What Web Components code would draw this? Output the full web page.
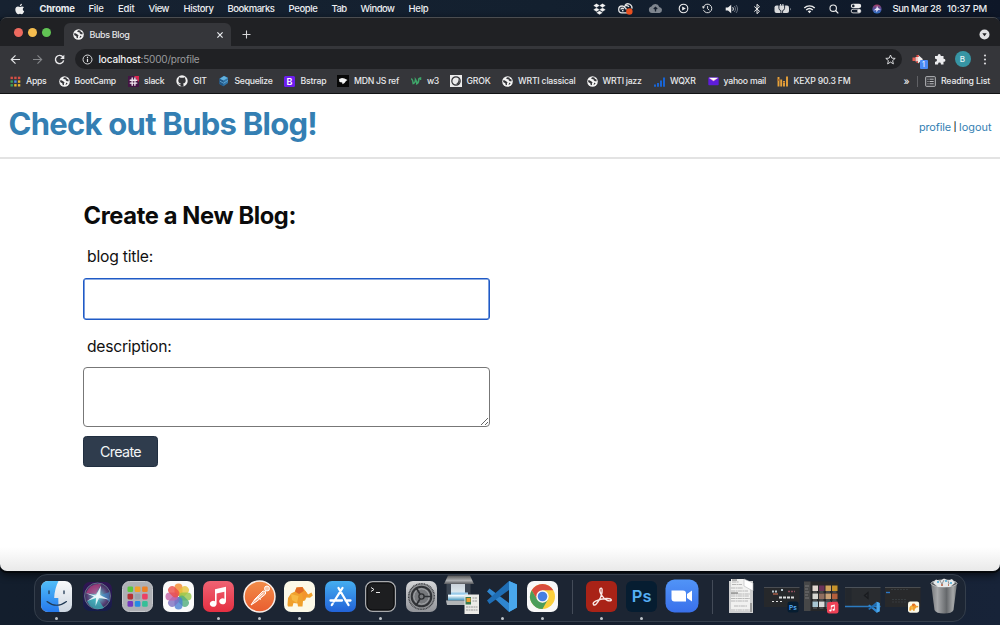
<!DOCTYPE html>
<html lang="en">
<head>
<meta charset="utf-8">
<title>Bubs Blog</title>
<style>
html,body{margin:0;height:100%;overflow:hidden;background:#141e2c}
body{font-family:Inter,"Liberation Sans",sans-serif}
</style>
</head>
<body>
<mac-desktop></mac-desktop>
<script>
const define=(name,html,init)=>customElements.define(name,class extends HTMLElement{
  constructor(){super();this.attachShadow({mode:'open'});}
  connectedCallback(){
    if(this.ready)return;this.ready=true;
    const t=document.createElement('template');
    t.innerHTML=typeof html==='function'?html(this):html;
    this.shadowRoot.append(t.content.cloneNode(true));
    if(init)init(this);
  }
});

/* name: [width, height, svg body] */
const globe='<circle cx="5.5" cy="5.5" r="5.3" fill="#f4f4f4"/><path d="M.8 4.6 2.500 4.200 4.500 5.600 5.600 6.400 4.900 7.400 5 9 3.800 9.200 3.300 7.200 1.500 6.300zM5.200 1.300l-1.100 1 .9 1 1.300-.2.4 1.200 1.200.9 1.800.1-.4-2-1.300-.4-.6-1.300zM7.200 6.800l1.400.1-.7 1.300-1.400.7z" fill="#35363a"/>';
const vs='<path d="M24 1 32 4.500V27.500L24 32 2 11.500 4.500 8.500 24 23z" fill="#2f86cf"/><path d="M24 1 2 20.500 4.500 24 24 10z" fill="#1f6eb5"/><path d="M24 1 32 4.500V27.500L24 32z" fill="#49a7ec"/>';
const note='<path d="M12 9.500 22.500 7V21a3.200 2.700 0 1 1-1.900-2.500V11.800L13.900 13.300V23.300a3.200 2.700 0 1 1-1.900-2.500z" fill="#fff"/>';
const eleph='<path d="M3.500 24 4 17 7 12.500 11 10.500 12.500 6.500 18.500 6 21.500 10 24 13.500 27.500 11.500 28.800 14.500 26 16.800 22.500 16.500 21 19.500 19 20 18.500 25.500H14L13.500 22.500 9.500 22 8.500 25.500H4z" fill="#f0a02c"/><path d="M11 10.500 12.500 6.500 18.500 6 20 10 15 13z" fill="#e06b25"/><path d="M7 13 14.500 15 13 22 8 19z" fill="#f7b843"/><path d="M18 11 21.500 10 24 14 21 16.500 19 20z" fill="#f3952c"/>';
const I={
apple:[10,12,'<path d="M7 .7c0 1.400-1 2.400-2.200 2.400C4.800 1.800 5.700.9 7 .7zM8.900 4.300c-1.600 1-1.500 3.200.3 4C8.700 9.700 7.700 11.200 6.800 11.200c-.7 0-1-.4-1.800-.4s-1.100.4-1.800.4C1.800 11.200.3 8.700.3 6.600c0-2 1.300-3.200 2.700-3.200.8 0 1.500.5 2 .5s1.200-.5 2.200-.5c.7 0 1.300.3 1.700.9z" fill="#eee"/>'],
dropbox:[13,12,'<path d="M3.500.8 6.300 2.600 3.500 4.400.7 2.600zM9.500.8l2.800 1.800-2.800 1.800-2.800-1.800zM3.500 4.900l2.800 1.800-2.800 1.800-2.800-1.800zM9.500 4.900l2.800 1.800-2.800 1.800-2.800-1.800zM6.500 8.100l2.800 1.600-2.800 1.700-2.800-1.700z" fill="#f4f4f4" stroke="#f4f4f4" stroke-width=".3"/>'],
cc:[15,12,'<path d="M7 2.400C8 .9 10 .4 11.700 1.300s2.600 2.500 2.200 4.400M10 9.900H4C2.200 9.900.7 8.500.7 6.500S2.300 3 4.200 3c2.400 0 3.200 2.300 4.300 3.500M3 6.500c0-1.500 2-1.700 2.800-.4M5.500 4.200C7 2.400 9.200 2.200 11 3.700M4 7.500l1.500.4" fill="none" stroke="#e6e6e6" stroke-width="1.300"/><circle cx="11.400" cy="8.500" r="3.200" fill="#e8501f"/>'],
cloud:[15,11,'<path d="M4 10a3.300 3.300 0 0 1-.6-6.500A4.200 4.200 0 0 1 11.300 3.900 3.100 3.100 0 0 1 11.600 10z" fill="#7e858e"/><path d="M7.500 8.500V4.500M5.800 6 7.500 4.300 9.200 6" stroke="#17202e" stroke-width="1.300" fill="none"/>'],
play:[11,11,'<circle cx="5.500" cy="5.500" r="4.300" fill="none" stroke="#eee" stroke-width="1.100"/><path d="M4.200 3.400 7.800 5.500 4.200 7.600z" fill="#eee"/>'],
clock:[11,11,'<path d="M1.400 4.100A4.300 4.300 0 1 1 1.500 7.100M5.600 3V5.700L7.300 7.200" fill="none" stroke="#ddd" stroke-width="1"/><path d="M0 3.200 3 3.700 1.100 5.900z" fill="#ddd"/>'],
vol:[14,10,'<path d="M.7 3.400H3L6.200.8V9.200L3 6.600H.7z" fill="#eee"/><path d="M7.700 3.200c.8 1 .8 2.600 0 3.600" fill="none" stroke="#eee"/><path d="M9.300 2c1.600 1.700 1.600 4.300 0 6M11 1c2 2.300 2 5.700 0 8" fill="none" stroke="#7d8590" stroke-width=".8"/>'],
bt:[8,12,'<path d="M1.300 3.500 6.500 8.300 4 10.700V1.300L6.500 3.700 1.300 8.500" fill="none" stroke="#eee" stroke-width="1"/>'],
batt:[19,10,'<rect x="1.500" y="1.500" width="14.500" height="7.500" rx="2" fill="#d8d9db"/><path d="M17 3.700v2.800q1.300-1.400 0-2.800z" fill="#d8d9db"/><path d="M5.900 1V4.300q.2 2 2 2.300V9.500M11.600 1V4.300q-.2 2-2 2.300V9.500" stroke="#16202f" stroke-width=".9" fill="none"/><path d="M7.600 0V1.700M9.900 0V1.700" stroke="#fff" stroke-width=".9" fill="none"/>'],
wifi:[13,10,'<path d="M1.300 4c2.900-2.900 7.500-2.900 10.400 0M3.200 6c1.900-1.800 4.700-1.800 6.600 0" fill="none" stroke="#eee" stroke-width="1.400"/><path d="M4.700 7.300q1.800-1.400 3.600 0L6.500 9.200z" fill="#eee"/>'],
search:[10,10,'<circle cx="4.200" cy="4.200" r="3.200" fill="none" stroke="#eee" stroke-width="1.100"/><path d="M6.500 6.500 9.300 9.300" stroke="#eee" stroke-width="1.200"/>'],
ctrl:[12,11,'<rect x=".8" y=".8" width="10.400" height="4.200" rx="2.100" fill="#eee"/><circle cx="3.300" cy="2.900" r="1.300" fill="#17202e"/><rect x="1.200" y="6.200" width="9.600" height="3.700" rx="1.850" fill="none" stroke="#ddd" stroke-width=".9"/><circle cx="8.900" cy="8.050" r="1.700" fill="#eee"/>'],
siriS:[10,10,'<defs><linearGradient id="a" x2="0" y2="1"><stop stop-color="#b23c62"/><stop offset=".4" stop-color="#5b4a94"/><stop offset="1" stop-color="#2c75c9"/></linearGradient></defs><circle cx="5" cy="5" r="4.600" fill="url(#a)"/><path d="M1.500 6.500 4.500 4 5 1.500 6 4 8.800 5.500 6 6 4.500 8.500 4.200 6z" fill="#e9e5fa"/>'],
globe:[11,11,globe],
close:[8,8,'<path d="M1.400 1.400 6.600 6.600M6.600 1.400 1.400 6.600" stroke="#e8eaed" stroke-width="1.200"/>'],
plus:[9,9,'<path d="M4.500.5V8.500M.5 4.500H8.500" stroke="#d5d6d8" stroke-width="1.100"/>'],
drop:[11,11,'<circle cx="5.500" cy="5.500" r="5" fill="#e0e1e3"/><path d="M3.300 4.300H7.700L5.500 7.300z" fill="#202124"/>'],
back:[11,11,'<path d="M10 5.500H1.500M5.500 1.300 1.300 5.500 5.500 9.700" stroke="#e4e5e7" stroke-width="1.200" fill="none"/>'],
fwd:[11,11,'<path d="M1 5.500H9.500M5.500 1.300 9.700 5.500 5.500 9.700" stroke="#85878a" stroke-width="1.100" fill="none"/>'],
reload:[11,11,'<path d="M9 3.200A4.100 4.100 0 1 0 9.600 6.300" stroke="#e8e8ea" stroke-width="1.400" fill="none"/><path d="M10.300.8V5H6.100z" fill="#e8e8ea"/>'],
info:[11,11,'<circle cx="5.500" cy="5.500" r="4.500" fill="none" stroke="#d8d9db"/><path d="M5.500 4.800V8M5.500 2.700V3.900" stroke="#e8e8ea" stroke-width="1.200"/>'],
star:[11,11,'<path d="M5.500 1 6.800 4.100 10.200 4.400 7.600 6.600 8.400 9.900 5.500 8.100 2.600 9.900 3.400 6.600.8 4.400 4.200 4.100z" fill="none" stroke="#dedfe1" stroke-width=".95"/>'],
horn:[12,11,'<path d="M.5 3.500H3.500V7H.5z" fill="#ea5a50"/><path d="M3.500 3H6.500V7.500H3.500z" fill="#f3c4c0"/><path d="M6 .8 11 5.200 6 9.500z" fill="#f0eeee"/><path d="M4.500 1H6.200L7.200 2.800 4.500 3zM4.500 7.500H6V9H4.500z" fill="#e74940"/>'],
puzzle:[12,12,'<path d="M1 3h2.700V2.500a1.500 1.500 0 0 1 3 0V3h2.800v2.800h.4a1.500 1.500 0 0 1 0 3h-.4V11.500H6.900V11a1.400 1.400 0 0 0-2.800 0v.5H1V8.700h.5a1.400 1.400 0 0 0 0-2.900H1z" fill="#ececee"/>'],
dots:[4,11,'<g fill="#d5d6d8"><circle cx="2" cy="1.500" r="1.100"/><circle cx="2" cy="5.500" r="1.100"/><circle cx="2" cy="9.500" r="1.100"/></g>'],
apps:[11,11,[['#d64f45','#d64f45','#d64f45'],['#3c9f58','#4b87e8','#e8b530'],['#3c9f58','#e8b530','#e8b530']].map((r,y)=>r.map((c,x)=>`<rect x="${.5+x*3.7}" y="${.7+y*3.7}" width="2.400" height="2.400" fill="${c}"/>`).join('')).join('')],
slack:[11,11,'<path d="M0 0H11V11H0z" fill="#441544"/><path d="M6 0H11V6z" fill="#d9264e"/><path d="M2.200 4.200H8.800M2.200 7.100H8.800M4.200 2V9.200M6.900 2V9.200" stroke="#f0e6ee" stroke-width="1.400" stroke-linecap="round"/><path d="M4.800 4.900h1.500v1.500H4.800z" fill="#63405f"/>'],
git:[12,12,'<circle cx="6" cy="6" r="5.700" fill="#f4f4f4"/><path d="M4.500 11.800V10c-1.600.2-1.800-.9-2.500-1.200 1.100-.3 1.300 1 2.500.5.100-.5.200-.7.500-.9C3 8.100 2.300 7.200 2.300 5.400c0-.7.200-1.200.6-1.600-.2-.6-.1-1.200.1-1.600.6 0 1.100.3 1.600.6q1.400-.3 2.800 0c.5-.3 1-.6 1.600-.6.200.4.300 1 .1 1.600.4.400.6.900.6 1.600 0 1.800-.7 2.700-2.700 3 .4.400.5.700.5 1.500v1.900z" fill="#35363a"/>'],
seq:[11,12,'<path d="M1.500 3.500 6 .7 10 2.800V8L5.500 11.300 1.500 9z" fill="#3175a8"/><path d="M1.500 3.500 5.500 5.600V11.300L1.500 9z" fill="#225989"/><path d="M2 3.700 6 1 9.700 3 5.500 5.600z" fill="#63b1dd"/><path d="M2 6.200 5.500 8.200 10 5.400" stroke="#72b6e0" stroke-width=".7" fill="none"/>'],
boot:[11,11,'<rect width="11" height="11" rx="1.500" fill="#6e1ef0"/><text x="5.500" y="8.700" font-family="Inter,sans-serif" font-size="9" font-weight="600" text-anchor="middle" fill="#fff">B</text>'],
mdn:[12,12,'<path d="M0 0H12V12H0z" fill="#080808"/><path d="M2 4 5 3 7.500 3.500 10.500 5 9 6 7.500 8 5.500 9.300 5.200 7.500 2.500 7z" fill="#f4f4f4"/>'],
w3:[12,10,'<path d="M1.300 2.500q1.700 1.500 1.900 5Q5.600 6.500 5.500 3.500q1.700 2.500 1.300 4.300Q9 7 8.700 2.300M9 2.400l1.500-.4v2" stroke="#3fa66a" stroke-width="1.500" fill="none"/>'],
grok:[12,12,'<path d="M0 0H12V12H0z" fill="#ececec"/><circle cx="6" cy="6" r="4.200" fill="none" stroke="#323337" stroke-width="1.200"/><path d="M5 9.300Q8.500 8.500 8.700 3.400L9.900 6.500 8.500 9.300z" fill="#404145"/>'],
wqxr:[11,11,'<path d="M1 8.500V10.800M4 7V10.800M7 4.500V10.800M10 1.500V10.800" stroke="#1964d2" stroke-width="2"/>'],
yahoo:[11,9,'<rect x=".3" y=".3" width="10.400" height="8" rx=".8" fill="#5e1cdb"/><path d="M1 1H10L5.500 4.300z" fill="#f1a4d0"/><path d="M1 .8H10L5.500 3.200z" fill="#fff"/>'],
kexp:[12,12,'<path d="M1.500 2V11.500M4.200 4.500V11.500M7 6V11.500M10 1.500V11.500" stroke="#e7a23a" stroke-width="1.900"/><path d="M1.500 4V6M7 7V8" stroke="#b16e27" stroke-width="1.900"/>'],
list:[11,11,'<rect x=".7" y=".7" width="9.600" height="9.600" rx=".6" fill="none" stroke="#bcbdc0"/><path d="M2.500 3.200H3.500M4.500 3.200H8.700M2.500 5.500H3.500M4.500 5.500H8.700M2.500 7.800H3.500M4.500 7.800H8.700" stroke="#bcbdc0" stroke-width="1"/>'],
finder:[31,31,'<defs><linearGradient id="a" x2="0" y2="1"><stop stop-color="#51bdf8"/><stop offset="1" stop-color="#2579ed"/></linearGradient><linearGradient id="b" x2="0" y2="1"><stop stop-color="#f8f9fb"/><stop offset="1" stop-color="#cdd6e1"/></linearGradient><clipPath id="c"><rect width="31" height="31" rx="7"/></clipPath></defs><g clip-path="url(#c)"><path d="M0 0H31V31H0z" fill="url(#b)"/><path d="M0 0H17.500Q13.500 8 13.200 17H17.300Q17 25 18.500 31H0z" fill="url(#a)"/></g><path d="M8 10V12.500M23 10V12.500" stroke="#203954" stroke-width="1.300" stroke-linecap="round"/><path d="M6 20.500Q15.500 28 25.500 20.500" fill="none" stroke="#203954" stroke-width="1.100" stroke-linecap="round"/>'],
siri:[31,31,'<defs><linearGradient id="a" x2="0" y2="1"><stop stop-color="#311454"/><stop offset="1" stop-color="#151d4a"/></linearGradient><radialGradient id="b"><stop stop-color="#e5f9fb"/><stop offset=".35" stop-color="#5f98b2"/><stop offset=".8" stop-color="#563b71"/><stop offset="1" stop-color="#31365d"/></radialGradient></defs><rect x="1" y="1" width="29" height="29" rx="7" fill="url(#a)"/><circle cx="15.500" cy="15" r="13" fill="url(#b)" stroke="#777c95" stroke-width=".8"/><path d="M4 12Q8 2 19 3L14 13z" fill="#be3d80" opacity=".65"/><path d="M5 20 14.500 16 22 27Q10 31 5 20z" fill="#37bcbf" opacity=".7"/><path d="M19 14 27.500 11V21z" fill="#3c9ee0" opacity=".5"/><path d="M3.500 12 14 14.500 19 4.500 18 14 27 18.500 17 17 13.500 25 14 17 5 20 12 15.500z" fill="#effcff" opacity=".9"/>'],
launch:[31,31,'<rect x=".5" y=".5" width="30" height="30" rx="7" fill="#aeb0b5" stroke="#c8cace"/>'+['#59c940','#f1a22b','#ee8126','#b53236','#9ba2aa','#ec4166','#7539be','#268be3','#35bf97'].map((c,i)=>`<rect x="${5.5+(i%3)*7.3}" y="${5.5+Math.floor(i/3)*7.300}" width="5.600" height="5.600" rx="1.300" fill="${c}"/>`).join('')],
photos:[31,31,'<rect width="31" height="31" rx="7" fill="#fafafa"/>'+['#f58a2c','#e7c43a','#93c54b','#50ad7c','#4a80d2','#7c6fc0','#c463a8','#ec4e49'].map((c,i)=>`<rect x="11.500" y="2.500" width="8" height="12.500" rx="4" fill="${c}" opacity=".8" transform="rotate(${i*45} 15.500 15.500)"/>`).join('')],
music:[31,31,'<defs><linearGradient id="a" x2="0" y2="1"><stop stop-color="#ef6373"/><stop offset="1" stop-color="#e52f42"/></linearGradient></defs><rect width="31" height="31" rx="7" fill="url(#a)"/><path d="M12 8.300 23 5.800V20.300a3.400 3 0 1 1-1.600-2.500V10.700L13.600 12.500V22.800a3.400 3 0 1 1-1.600-2.500z" fill="#fff"/>'],
postman:[33,33,'<defs><linearGradient id="a" x2="0" y2="1"><stop stop-color="#f28d49"/><stop offset="1" stop-color="#e95d2f"/></linearGradient></defs><circle cx="16.500" cy="16.500" r="15.500" fill="url(#a)" stroke="#f8eee9" stroke-width="1.500"/><circle cx="24" cy="8.500" r="2.500" fill="#f9c8ac" stroke="#fff" stroke-width="1"/><path d="M22.500 11.500 20 11 12 19 8 25 14 21 22.500 14z" fill="#f9b08c" stroke="#fff" stroke-width="1"/><path d="M11 20.500 20.500 13M15 17.500 18 19.500" fill="none" stroke="#fff" stroke-width="1"/>'],
eleph:[31,31,'<rect width="31" height="31" rx="7" fill="#fcf9e8"/>'+eleph],
appstore:[31,31,'<defs><linearGradient id="a" x2="0" y2="1"><stop stop-color="#45aef0"/><stop offset="1" stop-color="#2263d8"/></linearGradient></defs><rect width="31" height="31" rx="7" fill="url(#a)"/><path d="M17.500 7 9 20.500M7.700 22.600 6.800 24M13.500 7 23.500 24M5.500 19.500H17M20.500 19.500H25.500" stroke="#fff" stroke-width="2.300" stroke-linecap="round"/>'],
term:[31,31,'<rect x=".7" y=".7" width="29.600" height="29.600" rx="7" fill="#1d1e20" stroke="#a8aaad" stroke-width="1.400"/><rect x="2" y="2" width="27" height="27" rx="5.500" fill="none" stroke="#070708"/><path d="M6 6.500 9 8.500 6 10.500M11 11.500H15" stroke="#e9e9e9" stroke-width="1" fill="none"/>'],
prefs:[31,31,'<defs><linearGradient id="a" x2="0" y2="1"><stop stop-color="#d4d5d7"/><stop offset="1" stop-color="#929499"/></linearGradient></defs><rect width="31" height="31" rx="7" fill="url(#a)"/><circle cx="15.500" cy="15.500" r="12.800" fill="#929497" stroke="#404246" stroke-width="1.500" stroke-dasharray="1 .6"/><circle cx="15.500" cy="15.500" r="9.800" fill="#76787c" stroke="#303236" stroke-width="2"/><circle cx="15.500" cy="15.500" r="7.700" fill="none" stroke="#a7a9ac"/><circle cx="15.500" cy="15.500" r="2.600" fill="#75777b" stroke="#2c2e31" stroke-width="1.400"/><path d="M18 15.500H26M14.100 13.200 10 6.500M14.100 17.700 10 24.500" stroke="#2e3034" stroke-width="1.700"/>'],
scanner:[37,38,'<defs><linearGradient id="a" x2="0" y2="1"><stop stop-color="#555"/><stop offset=".6" stop-color="#aeb0b2"/><stop offset="1" stop-color="#56585c"/></linearGradient><linearGradient id="b" x2="0" y2="1"><stop stop-color="#c9d2da"/><stop offset=".45" stop-color="#dbe6ec"/><stop offset=".6" stop-color="#8cc5e8"/><stop offset=".7" stop-color="#f4fcff"/><stop offset="1" stop-color="#3d92bc"/></linearGradient></defs><g transform="translate(0 -1.500)"><path d="M5 0H27L31 8.500H1z" fill="url(#a)"/><path d="M3 8.500H28V28H3z" fill="#2c3440"/><path d="M5 8.500H25V25H5z" fill="url(#b)"/><path d="M4 8.500H8V19H4zM22 8.500H27V17H22z" fill="#3b4552"/><path d="M3 25H27L25 29.500H4z" fill="#b2b5b8"/></g><path d="M21.500 17.500H36V37H21.500z" fill="#ebebe7"/><path d="M22.500 20H28V27.500H22.500z" fill="#397b50"/><path d="M23.500 21H27.500V25H23.500z" fill="#ef9b2d"/><path d="M29.500 21H34.500M29.500 24H34.500M23 30H34.500M23 33H34.500" stroke="#999" stroke-dasharray="2 .5"/>'],
vscode:[34,33,vs],
chrome:[31,31,'<rect width="31" height="31" rx="7" fill="#f8f8f8"/><circle cx="15.500" cy="15.500" r="12.500" fill="#fbcf3c"/><path d="M4.700 9.200A12.500 12.500 0 0 1 26.300 9.300H15.500L10 18.600z" fill="#d84c3e"/><path d="M4.700 9.200 10.100 18.600 15.500 21.800 20.900 18.600 15.500 28A12.500 12.500 0 0 1 4.700 9.200z" fill="#4b9d5b"/><circle cx="15.500" cy="15.500" r="6.200" fill="#f8f8f8"/><circle cx="15.500" cy="15.500" r="4.800" fill="#477ee1"/>'],
acro:[31,31,'<rect width="31" height="31" rx="6" fill="#a92317"/><path d="M7.500 23.500C5.500 21.500 12 18 20.500 17.500 27 17.300 26.500 21 21.500 19.500 16 17 13 10.500 14 8 16 5 17.500 10 14.500 16.500 11 23.500 8.500 25 7.500 23.500z" fill="none" stroke="#f8e8e6" stroke-width="1.400"/>'],
ps:[31,31,'<rect width="31" height="31" rx="6" fill="#061d31"/><text x="15.700" y="20.800" font-family="Inter,sans-serif" font-size="16.500" font-weight="600" text-anchor="middle" fill="#55aff5">Ps</text>'],
zoom:[34,34,'<defs><linearGradient id="a" x2="0" y2="1"><stop stop-color="#5194f7"/><stop offset="1" stop-color="#3970eb"/></linearGradient></defs><rect x=".5" y=".5" width="33" height="33" rx="9" fill="url(#a)"/><path d="M6.500 11.500H18Q21 11.500 21 14.500V22.500H9.500Q6.500 22.500 6.500 19.500zM22 15 27 11.500V22.500L22 19z" fill="#fff"/>'],
doc:[26,36,'<path d="M1 3H25V35H1z" fill="#cfd0d1"/><path d="M3 1H16L22 8V33H3z" fill="#f1f1f0"/><path d="M16 1V8L25 13V5z" fill="#fff" stroke="#b6b7b8" stroke-width=".6"/><path d="M4 4H11M4 6.500H14M3 10H15M3 13H20M3 16H22M3 18H21M3 20.500H22M3 23H20M6 28H19M3 32H22" stroke="#aaa" stroke-width=".8" stroke-dasharray="4 .5 2 .4"/><path d="M3 15H10M4 2H9M23 25V34" stroke="#666" stroke-width="1"/>'],
win1:[36,31,'<path d="M0 6H35.500V26H0z" fill="#26282b"/><path d="M0 6.500H35.500" stroke="#4a4d52"/><path d="M8 10.500H14M17 9H20" stroke="#b8c5cd" stroke-width="2" stroke-dasharray="2 1"/><path d="M24 10.500H31" stroke="#8d4d5b" stroke-width="1.500" stroke-dasharray="2 1"/><path d="M9 13H14" stroke="#c86b50" stroke-width="1.200"/><path d="M15 16.500H31" stroke="#dedfe0" stroke-width="2" stroke-dasharray="3 1"/><path d="M8 20.500H20" stroke="#e2e2e2" stroke-dasharray="2 2"/><rect x="23.500" y="20.500" width="11" height="11" rx="2.500" fill="#061d31"/><text x="29" y="28.500" font-family="Inter,sans-serif" font-size="6.500" font-weight="600" text-anchor="middle" fill="#55aff5">Ps</text>'],
win2:[36,33,'<path d="M0 1.500H34.500V31H0z" fill="#262729"/><path d="M0 1.500H6.500V31H0z" fill="#464748"/><path d="M1 6H5M1 9H4M1 12H5M1 15H4M1 18H5" stroke="#777"/>'+['#e0d6cf','#6b3358','#d0a45c','#c7932a','#d7d7d2','#8f6e60','#caa176','#b45f3c','#a7c5d2','#d8d9d8','#5f7781','#b95766'].map((c,i)=>`<rect x="${8.5+(i%4)*6.500}" y="${5.5+Math.floor(i/4)*8}" width="5.500" height="5.500" fill="${c}"/><path d="M${9+(i%4)*6.500} ${12+Math.floor(i/4)*8}h4" stroke="#999" stroke-width=".6"/>`).join('')+'<g transform="translate(23 22) scale(.37)"><rect width="31" height="31" rx="6" fill="#ee4156"/><g transform="translate(-1.500 0)">'+note+'</g></g>'],
win3:[36,31,'<path d="M0 6H35.500V26H0z" fill="#292c30"/><path d="M0 6.500H35.500" stroke="#4b5159"/><path d="M.5 7V25H6.500V7" fill="#23272d"/><path d="M19 15 23 11.500V17.500L19 14" fill="none" stroke="#191b1f" stroke-width="1.200"/><path d="M0 25.500H35.500" stroke="#2c7bc0" stroke-width="1.400"/><g transform="translate(22.500 20.500) scale(.38 .35)">'+vs+'</g>'],
win4:[36,31,'<path d="M0 6H35.500V26H0z" fill="#28292b"/><path d="M0 6.500H35.500" stroke="#4a4d50"/><path d="M1 11.500H5" stroke="#2b77c5" stroke-width="1.400"/><path d="M6 8.500H24M7 18.500H22M7 21H21" stroke="#363b3e" stroke-dasharray="2 1"/><g transform="translate(23 20.500) scale(.36)"><rect width="31" height="31" rx="6" fill="#fcf9e8"/>'+eleph+'</g>'],
trash:[28,36,'<defs><linearGradient id="a"><stop stop-color="#77797c"/><stop offset=".25" stop-color="#a5a7a9"/><stop offset=".6" stop-color="#65686b"/><stop offset=".85" stop-color="#a6a8a9"/><stop offset="1" stop-color="#6f7274"/></linearGradient></defs><path d="M1 5H27L23.500 32Q22 35.500 14 35.500T4.500 32z" fill="url(#a)"/><ellipse cx="14" cy="5.500" rx="13" ry="3.500" fill="#505458" stroke="#b9bbbd"/><path d="M3 5 6 1.500 10 3 14 .5 18 2.500 22 1 25 5 20 9 8 9z" fill="#e7e9ea"/><path d="M7 4H9M15 3H17M20 5H22" stroke="#45a7d2" stroke-width="1.500"/><path d="M11 7H13M18 7H19" stroke="#b45b3d" stroke-width="1.500"/><path d="M10 3 12 6 14 2M18 3 19 6" stroke="#686c70" fill="none" stroke-width=".7"/>']
};

define('ui-icon',el=>{
  const [w,h,b]=I[el.getAttribute('name')];
  return `<style>:host{display:block;flex:none;width:${w}px;height:${h}px}svg{display:block;overflow:visible}</style><svg width="${w}" height="${h}" viewBox="0 0 ${w} ${h}">${b}</svg>`;
});

/* Text tracked out or in to occupy the width given by "w". */
define('fit-text','<style>:host{display:block;flex:none;white-space:pre}span{display:inline-block}</style><span><slot></slot></span>',el=>{
  const w=+el.getAttribute('w'), n=el.textContent.length;
  el.style.width=w+'px';
  const s=el.shadowRoot.querySelector('span');
  s.style.letterSpacing=((w-s.getBoundingClientRect().width)/n)+'px';
});

/* Fixed-size cell that centres its content. */
define('bar-cell',el=>`<style>:host{display:flex;flex:none;align-items:center;justify-content:center;width:${el.getAttribute('w')}px}</style><slot></slot>`);

const menus=[['Chrome',35,14],['File',15,14.500],['Edit',16.500,14],['View',20.500,14.500],['History',30,14],['Bookmarks',47,14],['People',29,14],['Tab',15,14],['Window',34,14],['Help',20,0]];
define('menu-bar',`<style>
:host{display:flex;height:17px;box-sizing:border-box;align-items:center;background:linear-gradient(90deg,#172231,#13202f 55%,#0e1728);color:#eceef0;font-size:9.500px;font-weight:500;line-height:17px;padding-left:14.500px}
ui-icon{margin-right:15px}.m{display:flex;flex:1}.first{font-weight:700}.s{display:flex;height:17px}.s ui-icon{margin:0}.t{display:flex;gap:6px;margin-left:8px;padding-right:13px}
</style><ui-icon name="apple"></ui-icon><div class="m">${menus.map(([t,w,g],i)=>`<fit-text w="${w}" style="margin-right:${g}px" class="${i?'':'first'}">${t}</fit-text>`).join('')}</div>
<div class="s">${[['dropbox',25.500],['cc',26],['cloud',35.500],['play',19],['clock',29],['vol',21],['bt',28],['batt',24],['wifi',30],['search',18],['ctrl',26],['siriS',16]].map(([n,w])=>`<bar-cell w="${w}"><ui-icon name="${n}"></ui-icon></bar-cell>`).join('')}</div>
<div class="t"><fit-text w="48.500">Sun Mar 28</fit-text><fit-text w="40">10:37 PM</fit-text></div>`);

define('tab-strip',`<style>
:host{display:flex;height:28px;background:#202124;align-items:flex-end;box-sizing:border-box}
.l{display:flex;gap:5px;width:64px;box-sizing:border-box;padding-left:14px;height:28px;align-items:center}
.l i{width:9px;height:9px;border-radius:50%}
.tab{display:flex;width:167px;height:23px;background:#35363a;border-radius:6px 6px 0 0;align-items:center;box-sizing:border-box;padding:0 7px 0 9px;color:#e4e5e7;font-size:9px;font-weight:500}
.tab fit-text{margin-left:5.500px}.tab ui-icon:last-child{margin-left:auto}
.plus{margin:0 auto 7px 11px}.drop{margin:0 10px 6px 0}
</style><div class="l"><i style="background:#ed6a5f"></i><i style="background:#f5bd4f"></i><i style="background:#61c454"></i></div>
<div class="tab"><ui-icon name="globe"></ui-icon><fit-text w="40">Bubs Blog</fit-text><ui-icon name="close"></ui-icon></div>
<ui-icon class="plus" name="plus"></ui-icon><ui-icon class="drop" name="drop"></ui-icon>`);

define('address-bar',`<style>
:host{display:flex;height:26px;background:#35363a;align-items:center;box-sizing:border-box;padding-left:3px}
.pill{display:flex;flex:none;width:827px;height:20px;border-radius:10px;background:#202124;align-items:center;box-sizing:border-box;padding:0 6.500px 0 7px;margin-left:4px;font-size:10px;color:#9a9b9e}
.pill ui-icon{margin-right:5.500px}.pill .star{margin:0 0 0 auto}
.host{color:#f0f0f1;font-weight:500}
.ext{position:relative;display:flex;width:31px;justify-content:center}
.badge{position:absolute;left:17.500px;top:6.500px;width:8px;height:9px;background:#4a8af4;border-radius:1px;color:#fff;font-size:7px;line-height:9px;text-align:center}
.me{width:16px;height:16px;border-radius:50%;background:#3795a4;color:#e5f3f5;font-size:8px;line-height:16px;text-align:center;font-weight:500}
</style><bar-cell w="24"><ui-icon name="back"></ui-icon></bar-cell><bar-cell w="21"><ui-icon name="fwd"></ui-icon></bar-cell><bar-cell w="23"><ui-icon name="reload"></ui-icon></bar-cell>
<div class="pill"><ui-icon name="info"></ui-icon><fit-text class="host" w="42">localhost</fit-text><fit-text w="59">:5000/profile</fit-text><ui-icon class="star" name="star"></ui-icon></div>
<div class="ext"><ui-icon name="horn"></ui-icon><span class="badge">1</span></div><bar-cell w="14"><ui-icon name="puzzle"></ui-icon></bar-cell><bar-cell w="31"><div class="me">B</div></bar-cell><bar-cell w="13"><ui-icon name="dots"></ui-icon></bar-cell>`);

/* icon, label, icon start, label start, label width */
const marks=[['apps','Apps',10,26,20.500],['globe','BootCamp',58.500,74.500,41.500],['slack','slack',128,144,20.500],['git','GIT',176,193,13.500],['seq','Sequelize',218,234.500,38],['boot','Bstrap',284,300.500,26],['mdn','MDN JS ref',337,354,45],['w3','w3',410,427,12],['grok','GROK',450,466.500,24],['globe','WRTI classical',501.500,518,57.500],['globe','WRTI jazz',586.500,602.500,39],['wqxr','WQXR',654,670,25.500],['yahoo','yahoo mail',707.500,723.500,42.500],['kexp','KEXP 90.3 FM',777,793.500,57]];
define('bookmark-item',el=>`<style>:host{display:flex;flex:none;align-items:center}ui-icon{margin-right:${el.getAttribute('gap')}px}</style><ui-icon name="${el.getAttribute('icon')}"></ui-icon><slot></slot>`);
define('bookmark-bar',`<style>
:host{display:flex;height:22px;box-sizing:border-box;background:#35363a;border-bottom:1px solid #111214;align-items:center;color:#e9eaec;font-size:8.700px;font-weight:500;padding:0 10px 3px}
.more{margin-left:auto;font-size:10px}i{width:1px;height:11px;background:#606165;margin:0 7.500px 0 7.500px}
</style>${marks.map(([n,t,a,b,w],i)=>`<bookmark-item icon="${n}" gap="${b-a-I[n][0]}" style="width:${(i<marks.length-1?marks[i+1][2]:860)-a}px"><fit-text w="${w}">${t}</fit-text></bookmark-item>`).join('')}
<fit-text class="more" w="5.500">»</fit-text><i></i><bookmark-item icon="list" gap="5"><fit-text w="49">Reading List</fit-text></bookmark-item>`);

define('site-header',`<style>
:host{display:flex;height:65px;box-sizing:border-box;border-bottom:2px solid #e3e3e3;padding:0 8.500px;justify-content:space-between;color:#347fb3}
h1{margin:0;font-size:31px;line-height:40px;font-weight:650;padding-top:10px}
nav{display:flex;font-size:10.900px;line-height:16px;padding-top:25px}b{font-weight:500;font-size:9px;color:#111;width:8px;text-align:center}
</style><h1><fit-text w="308.500">Check out Bubs Blog!</fit-text></h1><nav><fit-text w="32">profile</fit-text><b>|</b><fit-text w="32.500">logout</fit-text></nav>`);

define('blog-form',`<style>
:host{display:block;padding:42px 0 0 83px;color:#0b0b0b}
h2{margin:0;font-size:23.700px;line-height:30px;font-weight:650;padding-left:.5px}
label{display:block;font-size:15.700px;line-height:22px;padding-left:4px;color:#111}
input,textarea{display:block;box-sizing:border-box;width:407px;border-radius:3px;background:#fff;margin:0;outline:none}
input{height:42px;border:1px solid #1f5ac6;box-shadow:inset 0 0 0 .6px #1f5ac6}
textarea{height:60px;border:1px solid #777;resize:both;border-radius:4px}
button{display:flex;align-items:center;justify-content:center;width:75px;height:31px;margin:9px 0 0;padding:0;border:1px solid #202e40;border-radius:3.500px;background:#2f3c4d;color:#f2f4f6;font:14.300px Inter,sans-serif}
</style><h2><fit-text w="212.500">Create a New Blog:</fit-text></h2>
<label style="margin:15px 0 10px"><fit-text w="66">blog title:</fit-text></label><input>
<label style="margin:16px 0 9px"><fit-text w="84.500">description:</fit-text></label><textarea></textarea>
<button><fit-text w="41">Create</fit-text></button>`);

define('browser-window',`<style>
:host{display:flex;flex-direction:column;height:554px;box-sizing:border-box;border-top:1px solid #4b4d50;border-radius:7px;overflow:hidden;box-shadow:0 1px 0 1px #05080c,0 3px 9px #05080d}
main{flex:1;background:linear-gradient(#fff calc(100% - 24px),#e9e9e9)}
</style><tab-strip></tab-strip><address-bar></address-bar><bookmark-bar></bookmark-bar><main><slot></slot></main>`);

define('dock-item',el=>`<style>
:host{display:grid;flex:none;grid-template-rows:40px 5px;justify-items:center;align-items:center;width:${el.getAttribute('w')||40.500}px}
i{width:3px;height:3px;border-radius:50%;background:#bfc4ca}
</style><ui-icon name="${el.getAttribute('icon')}"></ui-icon>${el.hasAttribute('open')?'<i></i>':''}`);

const di=(n,o,w)=>`<dock-item icon="${n}"${o?' open':''}${w?` w="${w}"`:''}></dock-item>`;
define('app-dock',`<style>
:host{display:flex;width:932px;height:48px;box-sizing:border-box;margin:3px auto 0;border:1px solid #343e4b;border-radius:13px;background:#1c2533;padding:1px 0 0 1.250px}
i{flex:none;width:1px;height:34px;margin-top:4px;background:#434b58}
</style>${di('finder',1)+di('siri')+di('launch')+di('photos')+di('music',1)+di('postman',1)+di('eleph',1)+di('appstore')+di('term',1)+di('prefs')+di('scanner')+di('vscode',1)+di('chrome',1)}
<i style="margin-left:9px;margin-right:8.250px"></i>${di('acro',1)+di('ps',1)+di('zoom')}<i style="margin-left:9.500px;margin-right:8px"></i>${di('doc')+di('win1')+di('win2')+di('win3')+di('win4')+di('trash')}`);

define('mac-desktop',`<style>
:host{display:block;width:1000px;height:625px;overflow:hidden;background:linear-gradient(90deg,#131e2d,#151d2a 50%,#172338)}
</style><menu-bar></menu-bar><browser-window><site-header></site-header><blog-form></blog-form></browser-window><app-dock></app-dock>`);
</script>
</body>
</html>
